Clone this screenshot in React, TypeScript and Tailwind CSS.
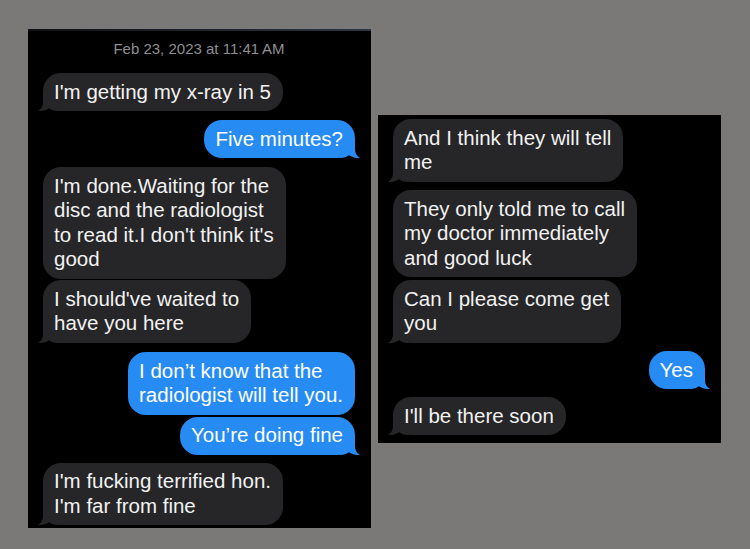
type Msg = { side: "in" | "out"; tail: boolean; mt: string; lines: string[] };

const leftMsgs: Msg[] = [
  { side: "in", tail: true, mt: "mt-[15px]", lines: ["I'm getting my x-ray in 5"] },
  { side: "out", tail: true, mt: "mt-[9px]", lines: ["Five minutes?"] },
  {
    side: "in",
    tail: false,
    mt: "mt-[9px]",
    lines: ["I'm done.Waiting for the", "disc and the radiologist", "to read it.I don't think it's", "good"],
  },
  { side: "in", tail: true, mt: "mt-[1.5px]", lines: ["I should've waited to", "have you here"] },
  { side: "out", tail: false, mt: "mt-[9.5px]", lines: ["I don\u2019t know that the", "radiologist will tell you."] },
  { side: "out", tail: true, mt: "mt-[2px]", lines: ["You\u2019re doing fine"] },
  { side: "in", tail: true, mt: "mt-[8px]", lines: ["I'm fucking terrified hon.", "I'm far from fine"] },
];

const rightMsgs: Msg[] = [
  { side: "in", tail: true, mt: "mt-[4px]", lines: ["And I think they will tell", "me"] },
  {
    side: "in",
    tail: false,
    mt: "mt-[8.5px]",
    lines: ["They only told me to call", "my doctor immediately", "and good luck"],
  },
  { side: "in", tail: true, mt: "mt-[3px]", lines: ["Can I please come get", "you"] },
  { side: "out", tail: true, mt: "mt-[8.5px]", lines: ["Yes"] },
  { side: "in", tail: true, mt: "mt-[8px]", lines: ["I'll be there soon"] },
];

function Tail({ side }: { side: "in" | "out" }) {
  const incoming = side === "in";
  return (
    <svg
      width="20"
      height="18"
      viewBox="0 0 20 18"
      className={
        incoming
          ? "absolute -left-[5px] bottom-0"
          : "absolute -right-[5px] bottom-0 -scale-x-100"
      }
    >
      <path
        d="M5 0 V9 C5 13 3.5 15.8 0 18 C4.5 18.3 8.5 17 11 15.2 C13 16.8 16 18 20 18 V0 Z"
        fill={incoming ? "#262628" : "#278bf4"}
      />
    </svg>
  );
}

function Bubble({ msg }: { msg: Msg }) {
  const incoming = msg.side === "in";
  return (
    <div className={`flex ${incoming ? "justify-start" : "justify-end"} ${msg.mt}`}>
      <div
        className={`relative rounded-[18px] pl-[11px] pr-[12px] py-[6.75px] text-[20.5px] leading-[24.5px] whitespace-nowrap ${
          incoming ? "bg-[#262628] text-[#f2f2f2]" : "bg-[#278bf4] text-white"
        }`}
      >
        {msg.tail && <Tail side={msg.side} />}
        <div className="relative">
          {msg.lines.map((l, i) => (
            <div key={i}>{l}</div>
          ))}
        </div>
      </div>
    </div>
  );
}

export default function App() {
  return (
    <div
      className="w-[750px] h-[549px] bg-[#7a7977] flex items-start gap-[7px] pl-[28px] pt-[29px] overflow-hidden"
      style={{ fontFamily: '"Liberation Sans", Arial, sans-serif' }}
    >
      <div className="w-[343px] h-[499px] bg-black flex flex-col pl-[15px] pr-[16px]">
        <div className="-ml-[15px] -mr-[16px] h-[2px] bg-linear-to-r from-[#0e1116] to-[#2c3642]" />
        <div className="pt-[9px] text-center text-[15px] leading-[18px] text-[#8e8e93]">
          Feb 23, 2023 at 11:41&#8201;AM
        </div>
        {leftMsgs.map((m, i) => (
          <Bubble key={i} msg={m} />
        ))}
      </div>

      <div className="mt-[86px] w-[343px] h-[328px] bg-black flex flex-col pl-[15px] pr-[16px]">
        {rightMsgs.map((m, i) => (
          <Bubble key={i} msg={m} />
        ))}
      </div>
    </div>
  );
}
